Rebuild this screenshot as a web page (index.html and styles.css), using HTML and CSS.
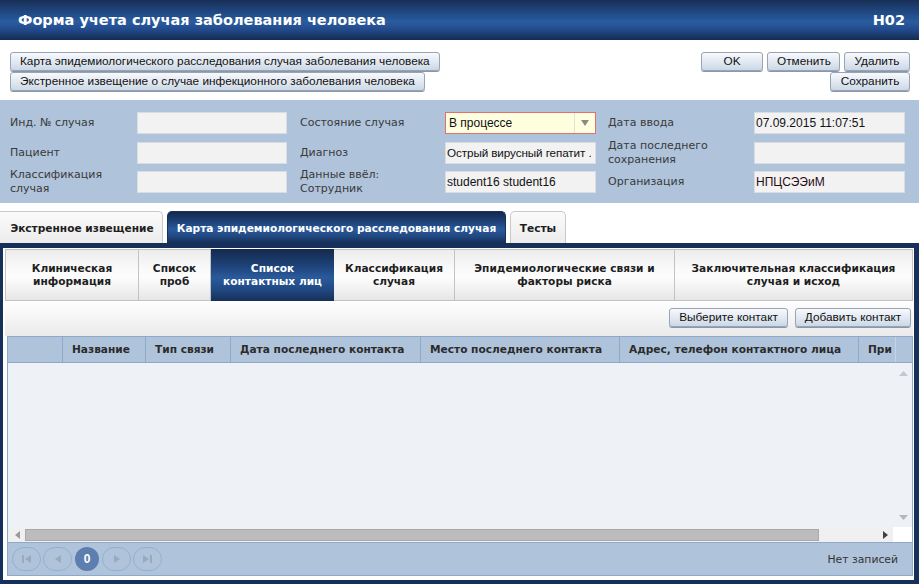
FILE: index.html
```html
<!DOCTYPE html>
<html lang="ru">
<head>
<meta charset="utf-8">
<title>Форма учета случая заболевания человека</title>
<link rel="stylesheet" href="styles.css">
</head>
<body>
<div class="page">
  <header class="header">
    <div class="title">Форма учета случая заболевания человека</div>
    <div class="code">Н02</div>
  </header>

  <div class="actions">
    <div class="actions-left">
      <button class="btn">Карта эпидемиологического расследования случая заболевания человека</button>
      <button class="btn">Экстренное извещение о случае инфекционного заболевания человека</button>
    </div>
    <div class="actions-right">
      <div class="btn-row">
        <button class="btn btn-ok">OK</button>
        <button class="btn btn-cancel">Отменить</button>
        <button class="btn btn-del">Удалить</button>
      </div>
      <div class="btn-row">
        <button class="btn btn-save">Сохранить</button>
      </div>
    </div>
  </div>

  <section class="form">
    <div class="lbl">Инд. № случая</div>
    <div class="inp"></div>
    <div class="lbl">Состояние случая</div>
    <div class="inp select"><span class="select-text">В процессе</span><span class="select-arrow"><svg width="8" height="6" viewBox="0 0 8 6"><path d="M0 0H8L4 6Z" fill="#8a8a8a"/></svg></span></div>
    <div class="lbl">Дата ввода</div>
    <div class="inp">07.09.2015 11:07:51</div>

    <div class="lbl">Пациент</div>
    <div class="inp"></div>
    <div class="lbl">Диагноз</div>
    <div class="inp diag">Острый вирусный гепатит .</div>
    <div class="lbl">Дата последнего<br>сохранения</div>
    <div class="inp"></div>

    <div class="lbl">Классификация<br>случая</div>
    <div class="inp"></div>
    <div class="lbl">Данные ввёл:<br>Сотрудник</div>
    <div class="inp">student16 student16</div>
    <div class="lbl">Организация</div>
    <div class="inp org">НПЦСЭЭиМ</div>
  </section>

  <nav class="tabs">
    <div class="tab tab-1">Экстренное извещение</div>
    <div class="tab tab-2 active">Карта эпидемиологического расследования случая</div>
    <div class="tab tab-3">Тесты</div>
  </nav>

  <div class="frame">
    <div class="subtabs">
      <div class="subtab st-1">Клиническая<br>информация</div>
      <div class="subtab st-2">Список<br>проб</div>
      <div class="subtab st-3 active">Список<br>контактных лиц</div>
      <div class="subtab st-4">Классификация<br>случая</div>
      <div class="subtab st-5">Эпидемиологические связи и<br>факторы риска</div>
      <div class="subtab st-6">Заключительная классификация<br>случая и исход</div>
    </div>
    <div class="pane">
      <div class="grid-toolbar">
        <button class="btn btn-pick">Выберите контакт</button>
        <button class="btn btn-add">Добавить контакт</button>
      </div>
      <div class="grid">
        <div class="grid-head">
          <div class="col c0"></div>
          <div class="col c1">Название</div>
          <div class="col c2">Тип связи</div>
          <div class="col c3">Дата последнего контакта</div>
          <div class="col c4">Место последнего контакта</div>
          <div class="col c5">Адрес, телефон контактного лица</div>
          <div class="col c6">При</div>
          <div class="col c7"></div>
        </div>
        <div class="grid-body">
          <div class="grid-rows"></div>
          <div class="vscroll">
            <svg width="9" height="5" viewBox="0 0 9 5"><path d="M0 5H9L4.5 0Z" fill="#c4c8ce"/></svg>
            <svg width="9" height="5" viewBox="0 0 9 5"><path d="M0 0H9L4.5 5Z" fill="#b4b8be"/></svg>
          </div>
        </div>
        <div class="hscroll">
          <span class="harrow"><svg width="5" height="8" viewBox="0 0 5 8"><path d="M5 0V8L0 4Z" fill="#9a9a9a"/></svg></span>
          <span class="thumb"></span>
          <span class="harrow harrow-r"><svg width="5" height="8" viewBox="0 0 5 8"><path d="M0 0V8L5 4Z" fill="#404040"/></svg></span>
          <span class="corner"></span>
        </div>
        <div class="pager">
          <div class="pager-btns">
            <span class="pbtn"><svg width="9" height="8" viewBox="0 0 9 8"><path d="M0 0H2V8H0Z M9 0V8L3 4Z" fill="#9aa9bd"/></svg></span>
            <span class="pbtn"><svg width="6" height="8" viewBox="0 0 6 8"><path d="M6 0V8L0 4Z" fill="#9aa9bd"/></svg></span>
            <span class="pnum">0</span>
            <span class="pbtn"><svg width="6" height="8" viewBox="0 0 6 8"><path d="M0 0V8L6 4Z" fill="#9aa9bd"/></svg></span>
            <span class="pbtn"><svg width="9" height="8" viewBox="0 0 9 8"><path d="M0 0V8L6 4Z M7 0H9V8H7Z" fill="#9aa9bd"/></svg></span>
          </div>
          <div class="pager-info">Нет записей</div>
        </div>
      </div>
    </div>
  </div>
</div>
</body>
</html>
```

FILE: styles.css
```css
* { box-sizing: border-box; }
html, body { margin: 0; padding: 0; }
body {
  width: 919px;
  height: 584px;
  overflow: hidden;
  background: #fff;
  font-family: "DejaVu Sans", Verdana, sans-serif;
  font-size: 11px;
  color: #333;
}
.page { width: 919px; height: 584px; display: flex; flex-direction: column; }

.header {
  height: 40px;
  flex: none;
  display: flex;
  align-items: center;
  justify-content: space-between;
  padding: 0 14px 0 18px;
  background: linear-gradient(#172f57 0%, #23508e 40%, #2a5c9f 55%, #22498a 75%, #152b52 100%);
  color: #fff;
  font-weight: bold;
  font-size: 14.5px;
}

.btn {
  font-family: "Liberation Sans", Arial, sans-serif;
  font-size: 11.8px;
  color: #111;
  height: 19px;
  padding: 0 9px;
  margin: 0;
  border: 1px solid #98a3b3;
  border-radius: 3px;
  background: linear-gradient(#f7f9fc 0%, #e4ebf3 45%, #cdd8e6 100%);
  box-shadow: 0 1px 0 #8a97aa;
  line-height: 17px;
  text-align: center;
  white-space: nowrap;
  cursor: pointer;
}

.actions {
  height: 60px;
  flex: none;
  display: flex;
  justify-content: space-between;
  padding: 12px 9px 0 10px;
}
.actions-left { display: flex; flex-direction: column; align-items: flex-start; gap: 1px; }
.actions-left .btn { padding: 0 9px; }
.actions-right { display: flex; flex-direction: column; align-items: flex-end; gap: 1px; }
.btn-row { display: flex; gap: 4px; }
.btn-ok { width: 62px; }
.btn-cancel { width: 73px; }
.btn-del { width: 66px; }
.btn-save { width: 80px; }

.form {
  height: 103px;
  flex: none;
  background: #afc3db;
  display: grid;
  grid-template-columns: 127px 150px 13px 145px 151px 12px 146px 151px;
  grid-template-rows: 22px 22px 22px;
  row-gap: 7.5px;
  padding: 12px 0 0 10px;
  align-items: center;
}
.form .lbl { line-height: 14px; color: #3a3a3a; }
.form .lbl:nth-child(6n+3) { grid-column: 4; }
.form .lbl:nth-child(6n+5) { grid-column: 7; }
.form .inp:nth-child(6n+4) { grid-column: 5; }
.form .inp:nth-child(6n+6) { grid-column: 8; }
.inp {
  height: 22px;
  background: #f2f2f2;
  border: 1px solid #d9dde2;
  font-family: "Liberation Sans", Arial, sans-serif;
  font-size: 12px;
  color: #111;
  line-height: 20px;
  padding: 0 1px;
  white-space: nowrap;
  overflow: hidden;
}
.inp.diag { font-size: 11.7px; letter-spacing: -0.1px; }
.inp.org { color: #2a0a14; }
.select {
  background: #ffffe0;
  border: 1px solid #e46f6f;
  display: flex;
  padding: 0 0 0 3px;
}
.select-text { flex: 1; }
.select-arrow {
  width: 21px;
  border-left: 1px solid #e3e3d0;
  display: flex;
  align-items: center;
  justify-content: center;
}

.tabs {
  flex: none;
  height: 40px;
  padding-top: 8px;
  display: flex;
  gap: 4px;
}
.tab {
  height: 32px;
  display: flex;
  align-items: center;
  justify-content: center;
  font-weight: bold;
  font-size: 10.6px;
  color: #1e1e1e;
  border: 1px solid #c9c9c9;
  border-bottom: none;
  border-radius: 5px 5px 0 0;
  background: linear-gradient(#fbfbfb, #ececec);
}
.tab-1 { width: 163px; border-left: none; border-radius: 0 5px 0 0; padding-left: 2px; }
.tab-2 { width: 339px; }
.tab-3 { width: 56px; }
.tab.active, .subtab.active {
  color: #fff;
  border-color: #17315b;
  background: linear-gradient(#14294d 0%, #1f457c 35%, #2a5a9c 55%, #20477f 80%, #162f58 100%);
}

.frame {
  flex: 1;
  display: flex;
  flex-direction: column;
  border-style: solid;
  border-color: #16305a;
  border-width: 5px 5px 4px 3px;
  padding: 1px 1px 4px 2px;
  background: #fff;
}
.subtabs { display: flex; height: 52px; flex: none; }
.subtab {
  height: 52px;
  display: flex;
  align-items: center;
  justify-content: center;
  text-align: center;
  font-weight: bold;
  font-size: 10.6px;
  line-height: 13px;
  color: #1e1e1e;
  border: 1px solid #c3c3c3;
  border-left: none;
  background: linear-gradient(#ececec 0%, #f9f9f9 35%, #fdfdfd 55%, #e6e6e6 100%);
}
.st-1 { width: 134px; border-left: 1px solid #c3c3c3; }
.st-2 { width: 72px; }
.st-3 { width: 123px; border: none; }
.st-4 { width: 121px; }
.st-5 { width: 220px; }
.st-6 { flex: 1; }

.pane { flex: 1; display: flex; flex-direction: column; padding: 0 0 0 2px; }
.grid-toolbar {
  height: 35px;
  flex: none;
  display: flex;
  justify-content: flex-end;
  align-items: center;
  gap: 7px;
  padding: 0 2px 2px 0;
  margin-left: -2px;
  background: linear-gradient(#ffffff, #eaeaea);
}
.btn-pick { width: 119px; padding: 0; }
.btn-add { width: 116px; padding: 0; }

.grid {
  flex: 1;
  display: flex;
  flex-direction: column;
  border: 1px solid #8fa9ca;
  border-bottom: none;
  background: #eef1f6;
}
.grid-head {
  height: 26px;
  flex: none;
  display: flex;
  background: #afc3db;
  border-bottom: 1px solid #8fa9ca;
}
.col {
  font-weight: bold;
  font-size: 10.6px;
  color: #2b2b2b;
  line-height: 25px;
  padding-left: 9px;
  border-right: 1px solid #8fa9ca;
  white-space: nowrap;
  overflow: hidden;
}
.c0 { width: 55px; }
.c1 { width: 83px; }
.c2 { width: 85px; }
.c3 { width: 190px; }
.c4 { width: 199px; }
.c5 { width: 239px; }
.c6 { width: 37px; border-right: 1px solid #c5d3e4; }
.c7 { flex: 1; border-right: none; }

.grid-body { flex: 1; display: flex; }
.grid-rows { flex: 1; }
.vscroll {
  width: 17px;
  display: flex;
  flex-direction: column;
  justify-content: space-between;
  align-items: center;
  padding: 8px 0 7px;
}
.hscroll {
  height: 15px;
  flex: none;
  display: flex;
  align-items: center;
  background: #f0f0f0;
}
.harrow { width: 17px; display: flex; justify-content: center; padding-left: 2px; }
.harrow-r { width: 16px; padding-left: 0; }
.thumb {
  width: 794px;
  height: 12px;
  background: #bcbcbc;
  border: 1px solid #a9a9a9;
  margin-right: 58px;
}
.corner { flex: 1; height: 15px; background: #fff; }

.pager {
  height: 34px;
  flex: none;
  display: flex;
  align-items: center;
  justify-content: space-between;
  background: #afc3db;
  border: 1px solid #8fa9ca;
  margin: 0 -1px;
  padding: 0 14px 0 4px;
}
.pager-btns { display: flex; align-items: center; gap: 2px; }
.pbtn {
  width: 29px;
  height: 24px;
  border: 1px solid #97afcf;
  border-radius: 12px;
  display: flex;
  align-items: center;
  justify-content: center;
}
.pnum {
  width: 24px;
  height: 24px;
  border-radius: 50%;
  background: #5d7eaf;
  color: #fff;
  font-family: "Liberation Sans", Arial, sans-serif;
  font-size: 12px;
  font-weight: bold;
  display: flex;
  align-items: center;
  justify-content: center;
  margin: 0 1px;
}
.pager-info { font-size: 10.8px; color: #333; }
```
